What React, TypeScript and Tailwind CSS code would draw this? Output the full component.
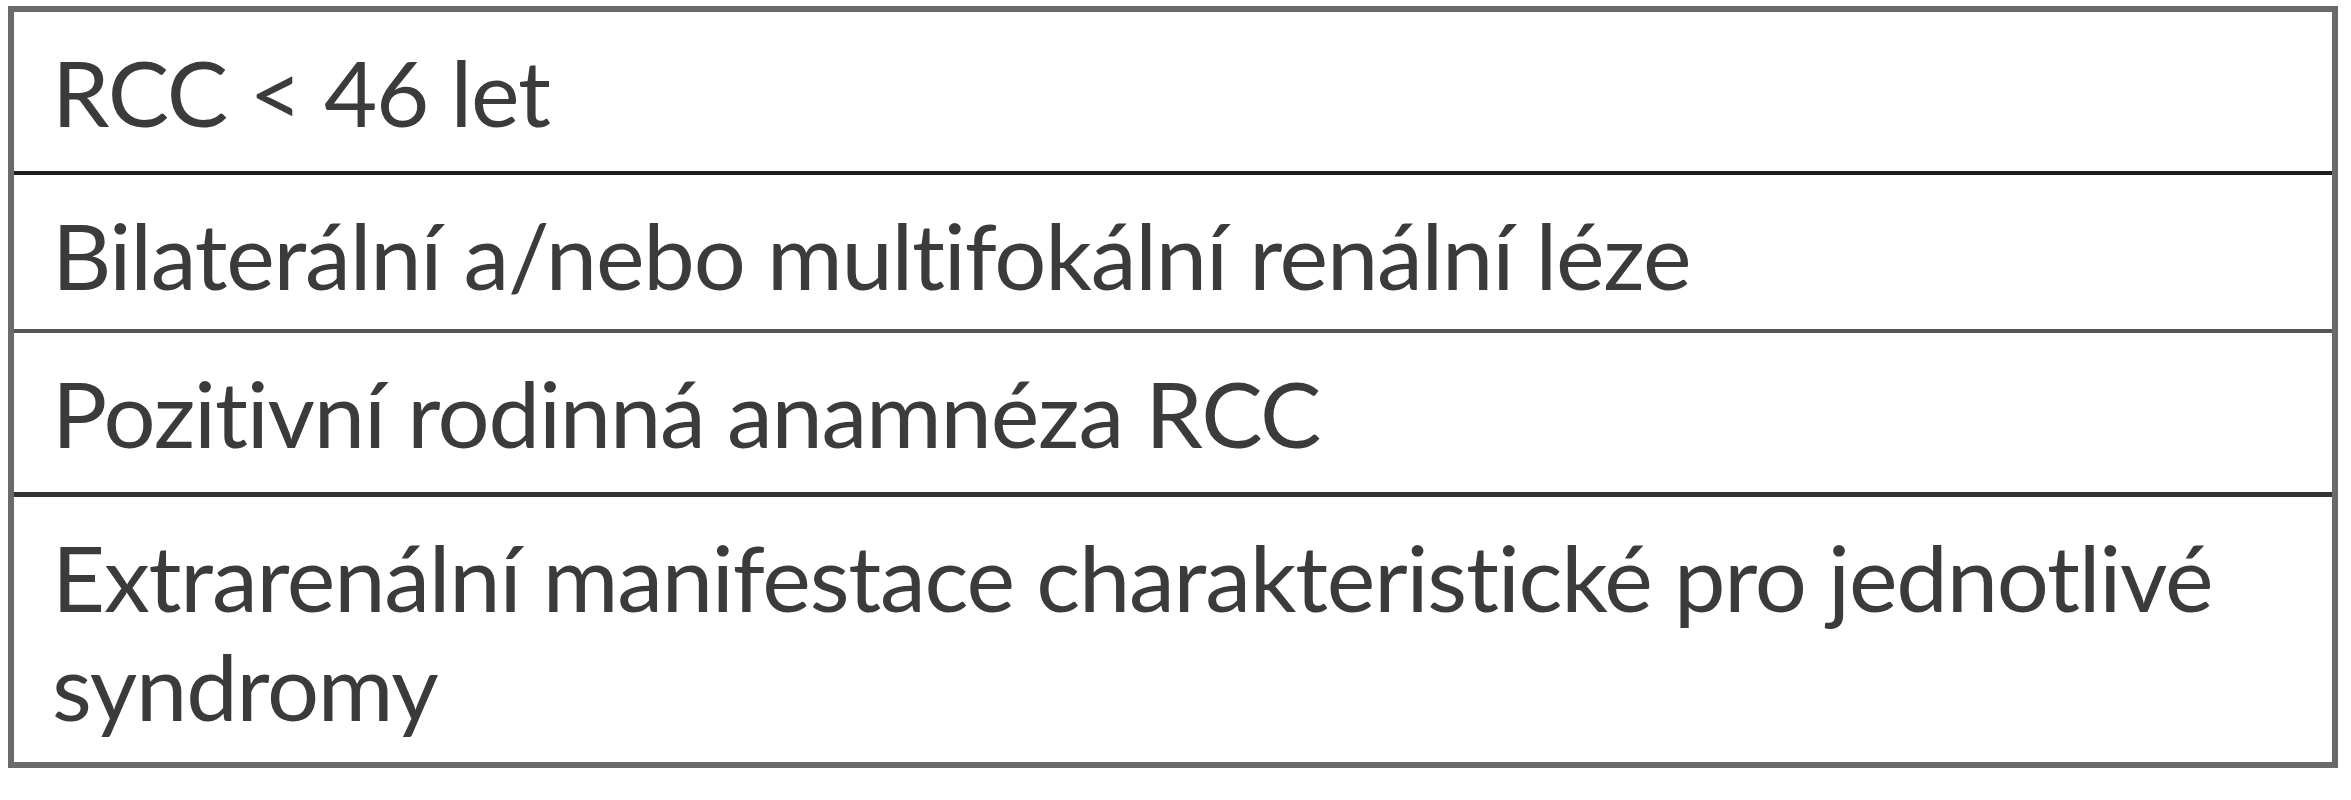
const rows = [
  { text: "RCC < 46 let", cls: "h-[163px] border-b-4 border-[#1e1e1e]" },
  { text: "Bilaterální a/nebo multifokální renální léze", cls: "h-[158px] border-b-4 border-[#555555]" },
  { text: "Pozitivní rodinná anamnéza RCC", cls: "h-[164px] border-b-[5px] border-[#333333]" },
  { text: "Extrarenální manifestace charakteristické pro jednotlivé syndromy", cls: "h-[265px]" },
];

export default function App() {
  return (
    <div className="bg-white w-[2351px] h-[800px] pt-[6px] pl-[8px]">
      <div className="w-[2330px] border-[6px] border-[#6a6a6a] bg-white">
        {rows.map((r) => (
          <div
            key={r.text}
            className={`${r.cls} pt-[25px] pl-[38px] pr-[40px] font-['Lato',sans-serif] text-[92px] leading-[109px] tracking-[-1.2px] text-[#3b3b3b] [font-variant-ligatures:none]`}
          >
            {r.text}
          </div>
        ))}
      </div>
    </div>
  );
}
